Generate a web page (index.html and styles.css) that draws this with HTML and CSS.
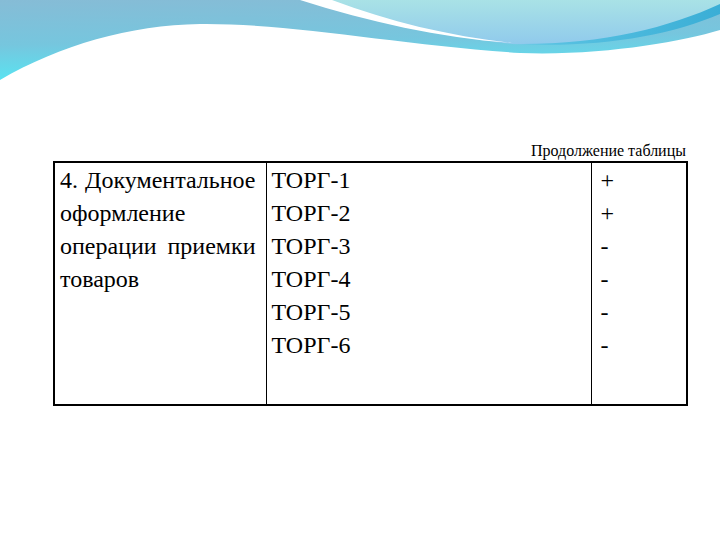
FILE: index.html
```html
<!DOCTYPE html>
<html lang="ru">
<head>
<meta charset="utf-8">
<link rel="stylesheet" href="styles.css">
</head>
<body>
<div class="slide">
  <svg class="wave" viewBox="0 0 720 80" width="720" height="80" preserveAspectRatio="none">
    <defs>
      <linearGradient id="bg" x1="0" y1="0" x2="0.15" y2="1">
        <stop offset="0" stop-color="#86bcd6"/>
        <stop offset="0.55" stop-color="#76c6de"/>
        <stop offset="1" stop-color="#58e4f2"/>
      </linearGradient>
      <linearGradient id="light" x1="0" y1="0" x2="0" y2="1">
        <stop offset="0" stop-color="#a9e2e6"/>
        <stop offset="1" stop-color="#90caec"/>
      </linearGradient>
      <linearGradient id="band" x1="0" y1="0" x2="1" y2="0">
        <stop offset="0" stop-color="#5fc6e4"/>
        <stop offset="1" stop-color="#3aaed6"/>
      </linearGradient>
    </defs>
    <rect x="0" y="0" width="720" height="80" fill="url(#bg)"/>
    <path d="M320,0 C380,22 440,36 512,44 C600,46 670,30 720,6 L720,0 Z" fill="url(#light)"/>
    <path d="M300,0 L332,0 C390,22 450,36 512,43 C440,38 370,22 300,0 Z" fill="#ffffff"/>
    <path d="M515,44 C600,45 668,28 720,4 L720,14 C668,36 600,48 515,44 Z" fill="url(#band)"/>
    <path d="M0,80 C60,45 130,25 200,24 C290,23 400,45 520,53 C600,56 680,42 720,30 L720,80 Z" fill="#ffffff"/>
  </svg>
  <div class="content">
    <p class="caption">Продолжение таблицы</p>
    <table class="tbl">
      <tr>
        <td class="cell c1">4. Документальное оформление операции приемки товаров</td>
        <td class="cell c2">ТОРГ-1<br>ТОРГ-2<br>ТОРГ-3<br>ТОРГ-4<br>ТОРГ-5<br>ТОРГ-6</td>
        <td class="cell c3">+<br>+<br>-<br>-<br>-<br>-</td>
      </tr>
    </table>
  </div>
</div>
</body>
</html>
```
FILE: styles.css
```css
html, body {
  margin: 0;
  padding: 0;
  background: #ffffff;
  font-family: "Liberation Serif", serif;
}
.slide {
  width: 720px;
  height: 540px;
  overflow: hidden;
  color: #000;
}
.wave {
  display: block;
}
.content {
  padding: 61px 32px 0 53px;
}
.caption {
  margin: 0 2px 0 0;
  text-align: right;
  font-family: "Liberation Serif", serif;
  font-size: 16px;
  line-height: 20px;
}
.tbl {
  border-collapse: collapse;
  width: 635px;
  border: 2px solid #000;
  table-layout: fixed;
}
.cell {
  vertical-align: top;
  font-family: "Liberation Serif", serif;
  font-size: 24px;
  line-height: 33px;
  padding: 1px 5px 0 5px;
  height: 243px;
  box-sizing: border-box;
}
.c1 {
  width: 212px;
  padding-right: 10px;
  text-align: justify;
  border-right: 1px solid #000;
}
.c2 {
  width: 325px;
  border-right: 1px solid #000;
}
.c3 {
  padding-left: 9px;
}
```
